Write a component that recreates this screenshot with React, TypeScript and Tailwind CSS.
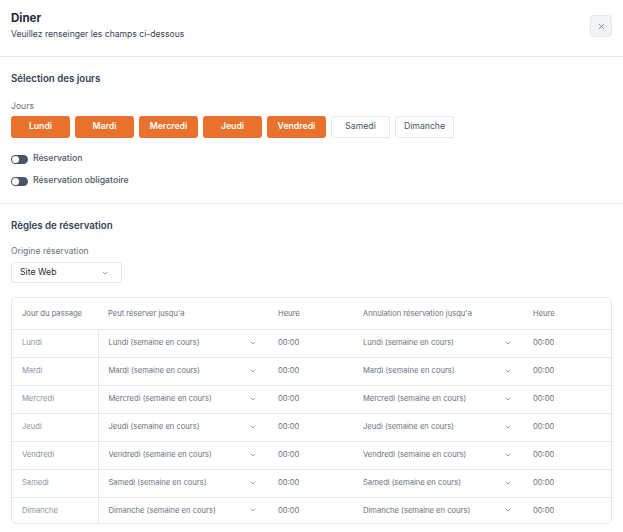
import { ChevronDown, X } from "lucide-react";

const DAYS = ["Lundi", "Mardi", "Mercredi", "Jeudi", "Vendredi", "Samedi", "Dimanche"];
const SELECTED = ["Lundi", "Mardi", "Mercredi", "Jeudi", "Vendredi"];

function Toggle({ label }: { label: string }) {
  return (
    <div className="flex h-[12px] items-center gap-[5px]">
      <span className="flex h-[9px] w-[17px] items-center rounded-full bg-[#4b5567] px-[1px]">
        <span className="h-[7px] w-[7px] rounded-full bg-white" />
      </span>
      <span className="text-[8.7px] font-medium text-[#4b5567]">{label}</span>
    </div>
  );
}

function CellSelect({ value }: { value: string }) {
  return (
    <div className="flex items-center justify-between pl-[10px] pr-[11px]">
      <span>{value}</span>
      <ChevronDown className="h-[8px] w-[8px] text-[#6b7280]" strokeWidth={2} />
    </div>
  );
}

export default function App() {
  return (
    <div className="h-[532px] w-[623px] bg-white text-[#1e293b]" style={{ fontFamily: "Inter, 'Noto Sans', sans-serif" }}>
      {/* en-tête */}
      <div className="flex items-start justify-between border-b border-[#e5e7eb] px-[11px] pb-[16px] pt-[11px]">
        <div>
          <h2 className="text-[11.5px] font-bold leading-[14px] text-[#1e293b]">Diner</h2>
          <p className="mt-[4px] text-[8.6px] leading-[11px] text-[#374151]">Veuillez renseinger les champs ci-dessous</p>
        </div>
        <button className="mt-[4px] flex h-[22px] w-[22px] items-center justify-center rounded-[4px] border border-[#e5e7eb] bg-[#f3f4f6] text-[#6b7280]">
          <X className="h-[9px] w-[9px]" strokeWidth={2} />
        </button>
      </div>

      {/* sélection des jours */}
      <div className="border-b border-[#e5e7eb] px-[11px] pb-[16px] pt-[15px]">
        <h3 className="text-[9.7px] font-semibold leading-[13px] text-[#334155]">Sélection des jours</h3>
        <div className="mt-[16px] text-[8.6px] leading-[11px] text-[#6b7280]">Jours</div>
        <div className="mt-[4px] flex gap-[5px]">
          {DAYS.map((d) => {
            const on = SELECTED.includes(d);
            return (
              <button
                key={d}
                className={
                  on
                    ? "flex h-[22px] w-[59px] items-center justify-center rounded-[3px] bg-[#e8712b] text-[8.7px] font-semibold text-white"
                    : "flex h-[22px] w-[59px] items-center justify-center rounded-[3px] border border-[#e5e7eb] bg-white text-[8.7px] text-[#4b5563]"
                }
              >
                {d}
              </button>
            );
          })}
        </div>
        <div className="mt-[15px] flex flex-col gap-[10px]">
          <Toggle label="Réservation" />
          <Toggle label="Réservation obligatoire" />
        </div>
      </div>

      {/* règles */}
      <div className="px-[11px] pt-[15px]">
        <h3 className="text-[9.7px] font-semibold leading-[13px] text-[#334155]">Règles de réservation</h3>
        <div className="mt-[14px] text-[8.6px] leading-[11px] text-[#6b7280]">Origine réservation</div>
        <div className="mt-[5px] flex h-[21px] w-[111px] items-center justify-between rounded-[3px] border border-[#e5e7eb] pl-[8px] pr-[12px] text-[8.7px] text-[#1f2937]">
          <span>Site Web</span>
          <ChevronDown className="h-[8px] w-[8px] text-[#6b7280]" strokeWidth={2} />
        </div>

        <div className="mt-[14px] overflow-hidden rounded-[5px] border border-[#e5e7eb]">
          <table className="w-full table-fixed border-collapse text-left text-[7.6px] text-[#6b7280]">
            <colgroup>
              <col className="w-[86px]" />
              <col className="w-[170px]" />
              <col className="w-[85px]" />
              <col className="w-[170px]" />
              <col />
            </colgroup>
            <thead>
              <tr className="h-[31px] border-b border-[#e5e7eb]">
                <th className="pl-[10px] font-normal">Jour du passage</th>
                <th className="pl-[10px] font-normal">Peut réserver jusqu'a</th>
                <th className="pl-[10px] font-normal">Heure</th>
                <th className="pl-[10px] font-normal">Annulation réservation jusqu'a</th>
                <th className="pl-[10px] font-normal">Heure</th>
              </tr>
            </thead>
            <tbody>
              {DAYS.map((d, i) => (
                <tr key={d} className={i < DAYS.length - 1 ? "h-[28px] border-b border-[#e5e7eb]" : "h-[26px]"}>
                  <td className="border-r border-[#e5e7eb] pl-[10px] text-[#8a93a3]">{d}</td>
                  <td>
                    <CellSelect value={`${d} (semaine en cours)`} />
                  </td>
                  <td className="pl-[10px]">00:00</td>
                  <td>
                    <CellSelect value={`${d} (semaine en cours)`} />
                  </td>
                  <td className="pl-[10px]">00:00</td>
                </tr>
              ))}
            </tbody>
          </table>
        </div>
      </div>
    </div>
  );
}
